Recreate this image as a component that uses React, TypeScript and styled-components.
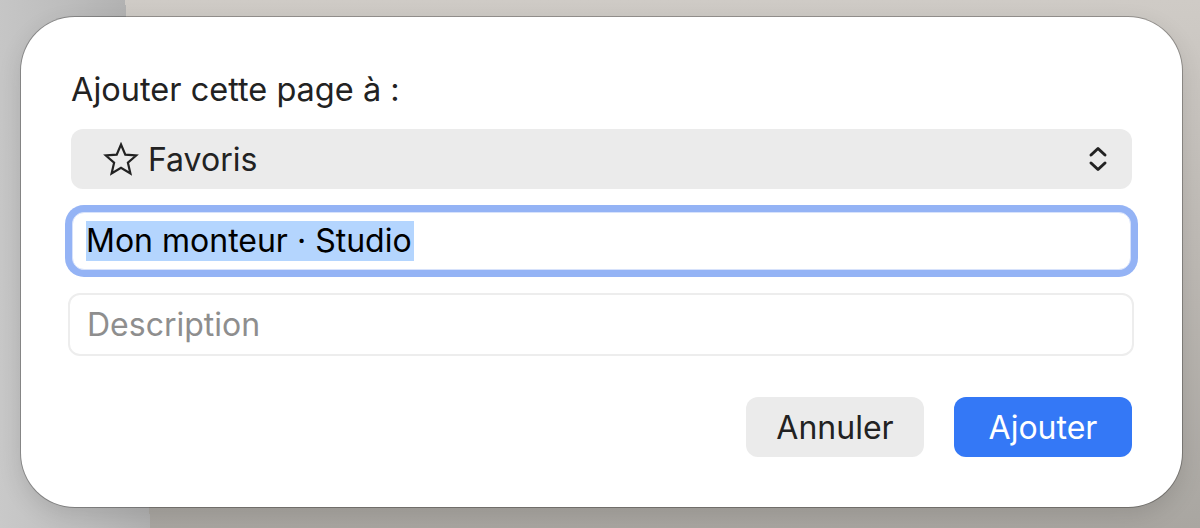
import React from "react";
import styled, { createGlobalStyle } from "styled-components";

const GlobalStyle = createGlobalStyle`
  html, body {
    margin: 0;
    padding: 0;
    width: 1200px;
    height: 528px;
    overflow: hidden;
  }
  body {
    font-family: Inter, "Noto Sans", "Liberation Sans", sans-serif;
    background:
      linear-gradient(87.3deg, #c9c9c9 0px, #bdbdbd 90px, #b2b2b2 150px, rgba(0,0,0,0) 150px),
      linear-gradient(180deg, #cfcbc6 0%, #bdb9b4 50%, #a9a6a1 100%);
  }
`;

const Page = styled.div`
  width: 1200px;
  height: 528px;
  padding: 17px 0 0 21px;
  box-sizing: border-box;
`;

const Dialog = styled.div`
  width: 1161px;
  height: 490px;
  box-sizing: border-box;
  background: #ffffff;
  border-radius: 54px;
  box-shadow: 0 0 0 1px rgba(0, 0, 0, 0.28), 0 8px 24px rgba(0, 0, 0, 0.12);
  padding: 54px 50px 50px 50px;
  display: flex;
  flex-direction: column;
`;

const Title = styled.div`
  font-size: 32.5px;
  line-height: 38px;
  color: #222222;
`;

const Select = styled.div`
  margin-top: 20px;
  height: 60px;
  border-radius: 12px;
  background: #ebebeb;
  display: flex;
  align-items: center;
  padding: 0 24px 0 32px;
  gap: 9px;
`;

const SelectLabel = styled.span`
  flex: 1;
  font-size: 32px;
  color: #222222;
`;

const Field = styled.div<{ $focused?: boolean }>`
  margin: ${(p) => (p.$focused ? "23px 1px 0 1px" : "23px -2px 0 -3px")};
  height: ${(p) => (p.$focused ? "58px" : "63px")};
  box-sizing: border-box;
  border-radius: 12px;
  background: #ffffff;
  border: ${(p) => (p.$focused ? "1px solid #d7e2fb" : "2px solid #ededed")};
  box-shadow: ${(p) => (p.$focused ? "0 0 0 7px #94b3f5" : "none")};
  display: flex;
  align-items: center;
  padding: 0 ${(p) => (p.$focused ? "13px" : "17px")};
  font-size: 32px;
`;

const Selected = styled.span`
  background: #b4d5fe;
  color: #000000;
  line-height: 40px;
  padding-right: 2px;
`;

const Placeholder = styled.span`
  color: #8e8e8e;
`;

const Actions = styled.div`
  margin-top: 41px;
  display: flex;
  justify-content: flex-end;
  gap: 30px;
`;

const Button = styled.button<{ $primary?: boolean }>`
  width: 178px;
  height: 60px;
  border: none;
  border-radius: 12px;
  font-family: Inter, "Noto Sans", "Liberation Sans", sans-serif;
  font-size: 32px;
  background: ${(p) => (p.$primary ? "#3478f6" : "#ebebeb")};
  color: ${(p) => (p.$primary ? "#ffffff" : "#222222")};
  padding: 0;
`;

const StarIcon = () => (
  <svg width="36" height="34" viewBox="0 0 36 34" fill="none">
    <path
      d="M18 2.5 L22.3 12.6 L33.2 13.5 L24.9 20.7 L27.4 31.4 L18 25.7 L8.6 31.4 L11.1 20.7 L2.8 13.5 L13.7 12.6 Z"
      stroke="#222222"
      strokeWidth="2.2"
      strokeLinejoin="miter"
    />
  </svg>
);

const UpDownIcon = () => (
  <svg width="20" height="28" viewBox="0 0 20 28" fill="none">
    <path d="M3 10 L10 3.5 L17 10" stroke="#222222" strokeWidth="3" strokeLinecap="round" strokeLinejoin="round" />
    <path d="M3 18 L10 24.5 L17 18" stroke="#222222" strokeWidth="3" strokeLinecap="round" strokeLinejoin="round" />
  </svg>
);

export default function App() {
  return (
    <>
      <GlobalStyle />
      <Page>
        <Dialog>
          <Title>Ajouter cette page à :</Title>
          <Select>
            <StarIcon />
            <SelectLabel>Favoris</SelectLabel>
            <UpDownIcon />
          </Select>
          <Field $focused>
            <Selected>Mon monteur · Studio</Selected>
          </Field>
          <Field>
            <Placeholder>Description</Placeholder>
          </Field>
          <Actions>
            <Button>Annuler</Button>
            <Button $primary>Ajouter</Button>
          </Actions>
        </Dialog>
      </Page>
    </>
  );
}
